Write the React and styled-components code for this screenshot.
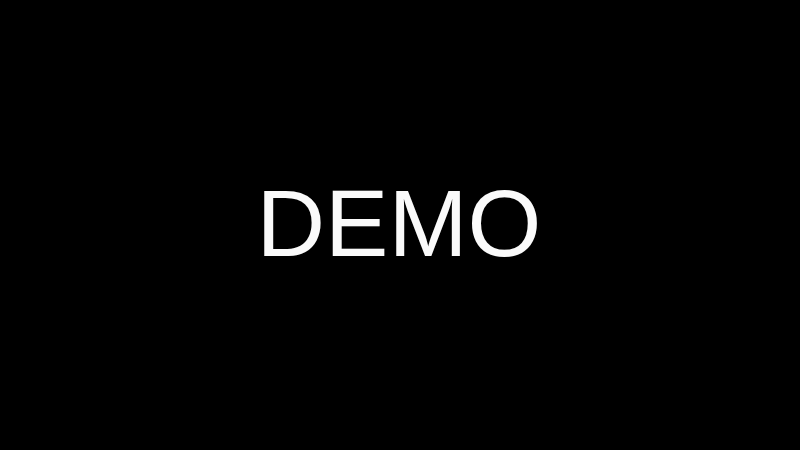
import React from 'react'
import styled, { createGlobalStyle } from 'styled-components'

const GlobalStyle = createGlobalStyle`
    html, body {
        margin: 0;
        padding: 0;
        background: #000;
    }
`

const Screen = styled.div`
    width: 800px;
    height: 450px;
    background: #000;
    display: flex;
    align-items: center;
    justify-content: center;
`

const Title = styled.h1`
    margin: 0;
    padding-bottom: 3px;
    padding-right: 2px;
    font-family: 'Liberation Sans', Arial, sans-serif;
    font-weight: 400;
    font-size: 95px;
    line-height: 1;
    color: #fafafa;
    letter-spacing: 0;
`

export default function App() {
    return (
        <>
            <GlobalStyle />
            <Screen>
                <Title>DEMO</Title>
            </Screen>
        </>
    )
}
